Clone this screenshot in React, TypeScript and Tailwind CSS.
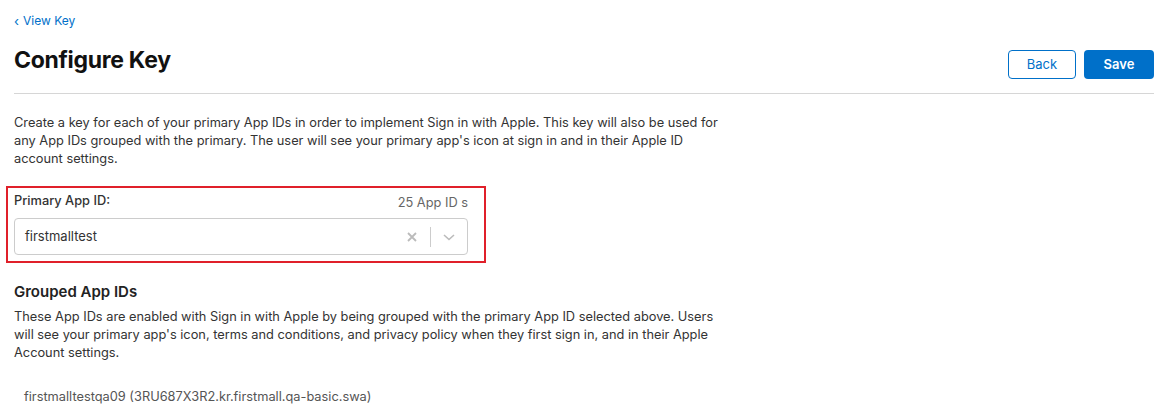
import React from "react";

export default function App() {
  return (
    <div className="w-[1164px] h-[410px] overflow-hidden bg-white text-[#333] px-[10px]" style={{ fontFamily: "Inter, 'Noto Sans', sans-serif" }}>
      <div className="px-[4px] pt-[13px]">
        <a className="text-[12px] text-[#0070c9] flex items-center gap-[4px] leading-[16px]">
          <span className="text-[13px]">‹</span>
          <span>View Key</span>
        </a>
      </div>
      <div className="flex items-end justify-between pt-[16px] pb-[14px] border-b border-[#d6d6d6] ml-[4px]">
        <h1 className="text-[23px] font-bold text-[#111] leading-[30px] tracking-[-0.3px] mb-[4px]">Configure Key</h1>
        <div className="flex gap-[8px]">
          <button className="w-[68px] h-[29px] rounded-[4px] border border-[#0070c9] text-[#0070c9] text-[13px]">Back</button>
          <button className="w-[70px] h-[29px] rounded-[4px] bg-[#0070c9] text-white text-[13px] font-semibold">Save</button>
        </div>
      </div>
      <p className="ml-[4px] mt-[20px] w-[706px] text-[12.8px] leading-[18px] text-[#333]">
        Create a key for each of your primary App IDs in order to implement Sign in with Apple. This key will also be used for any App IDs grouped with the primary. The user will see your primary app's icon at sign in and in their Apple ID account settings.
      </p>
      <div className="mt-[18px] ml-[-4px] w-[480px] border-2 border-[#e0202a] pl-[6px] pr-[16px] pt-[4px] pb-[6px]">
        <div className="flex justify-between items-center h-[18px]">
          <span className="text-[12.8px] font-medium text-[#333]">Primary App ID:</span>
          <span className="text-[12.8px] text-[#666] mt-[4px]">25 App ID s</span>
        </div>
        <div className="mt-[8px] h-[37px] rounded-[4px] border border-[#ccc] flex items-center pl-[10px]">
          <span className="flex-1 text-[13px] text-[#333]">firstmalltest</span>
          <svg width="12" height="12" viewBox="0 0 12 12" className="mr-[12px]">
            <path d="M2 2L10 10M10 2L2 10" stroke="#bbb" strokeWidth="1.8" />
          </svg>
          <div className="w-px h-[20px] bg-[#ccc]" />
          <svg width="14" height="10" viewBox="0 0 14 10" className="mx-[11px]">
            <path d="M2 3L7 7.5L12 3" stroke="#bbb" strokeWidth="1.6" fill="none" />
          </svg>
        </div>
      </div>
      <h2 className="ml-[4px] mt-[19px] text-[15px] font-semibold text-[#222] leading-[20px]">Grouped App IDs</h2>
      <p className="ml-[4px] mt-[6px] w-[706px] text-[12.8px] leading-[18px] text-[#333]">
        These App IDs are enabled with Sign in with Apple by being grouped with the primary App ID selected above. Users will see your primary app's icon, terms and conditions, and privacy policy when they first sign in, and in their Apple Account settings.
      </p>
      <div className="mt-[26px] ml-[14px] text-[12.8px] text-[#555] leading-[18px]">
        firstmalltestqa09 (3RU687X3R2.kr.firstmall.qa-basic.swa)
      </div>
    </div>
  );
}
